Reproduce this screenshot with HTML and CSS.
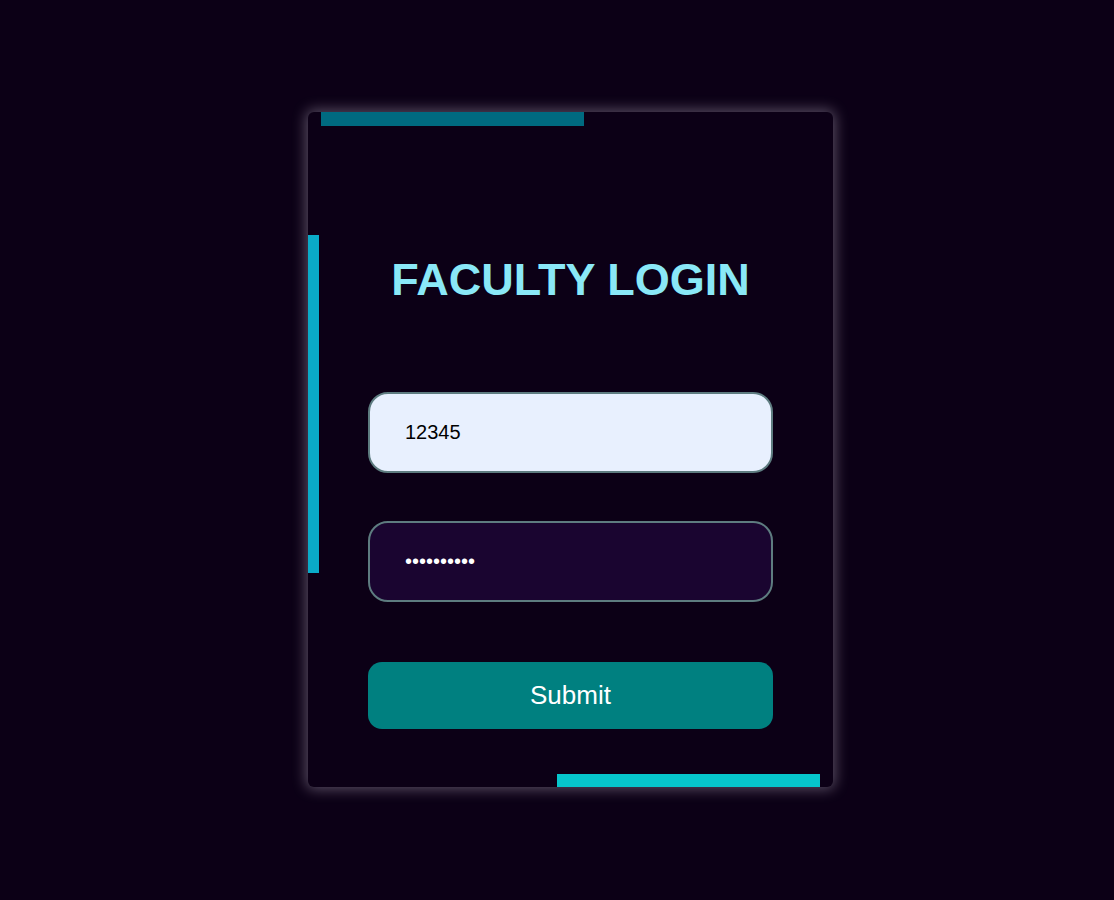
FILE: index.html
```html
<!DOCTYPE html>
<html lang="en">
<head>
<meta charset="utf-8">
<title>Faculty Login</title>
<link rel="stylesheet" href="styles.css">
</head>
<body>
<div class="card">
  <span class="bar bar-top"></span>
  <span class="bar bar-left"></span>
  <span class="bar bar-bottom"></span>
  <h1 class="title">FACULTY LOGIN</h1>
  <form class="form">
    <input class="field field-id" type="text" value="12345">
    <input class="field field-pass" type="password" value="abcdefghij">
    <button class="submit" type="button">Submit</button>
  </form>
</div>
</body>
</html>
```
FILE: styles.css
```css
html, body {
  margin: 0;
  padding: 0;
  background: #0c0016;
  font-family: "Liberation Sans", Arial, sans-serif;
}
body {
  display: flex;
  justify-content: center;
  padding-top: 112px;
  min-height: 900px;
  box-sizing: border-box;
}
.card {
  position: relative;
  width: 525px;
  height: 675px;
  box-sizing: border-box;
  background: #0c0016;
  border-radius: 6px;
  box-shadow: 0 0 14px 2px rgba(210, 200, 220, 0.4);
  padding: 0 60px;
  margin-left: 27px;
  overflow: hidden;
}
.bar {
  position: absolute;
  display: block;
}
.bar-top {
  top: 0;
  left: 13px;
  width: 263px;
  height: 14px;
  background: #006a80;
}
.bar-left {
  left: 0;
  top: 123px;
  width: 11px;
  height: 338px;
  background: #0aabc8;
}
.bar-bottom {
  bottom: 0;
  right: 13px;
  width: 263px;
  height: 13px;
  background: #06c6cc;
}
.title {
  margin: 0;
  padding-top: 142px;
  text-align: center;
  font-size: 45px;
  line-height: 52px;
  font-weight: bold;
  color: #8ae8f7;
}
.form {
  display: flex;
  flex-direction: column;
  margin-top: 86px;
}
.field {
  height: 81px;
  box-sizing: border-box;
  border: 2px solid #5e7c80;
  border-radius: 20px;
  padding: 0 35px;
  font-family: "Liberation Sans", Arial, sans-serif;
  font-size: 20px;
  outline: none;
}
.field-id {
  background: #e8f0fe;
  color: #000;
}
.field-pass {
  margin-top: 48px;
  background: #1a0530;
  color: #fff;
  font-size: 20px;
}
.submit {
  margin-top: 60px;
  height: 67px;
  border: none;
  border-radius: 14px;
  background: #008080;
  color: #fff;
  font-family: "Liberation Sans", Arial, sans-serif;
  font-size: 26px;
}
```
